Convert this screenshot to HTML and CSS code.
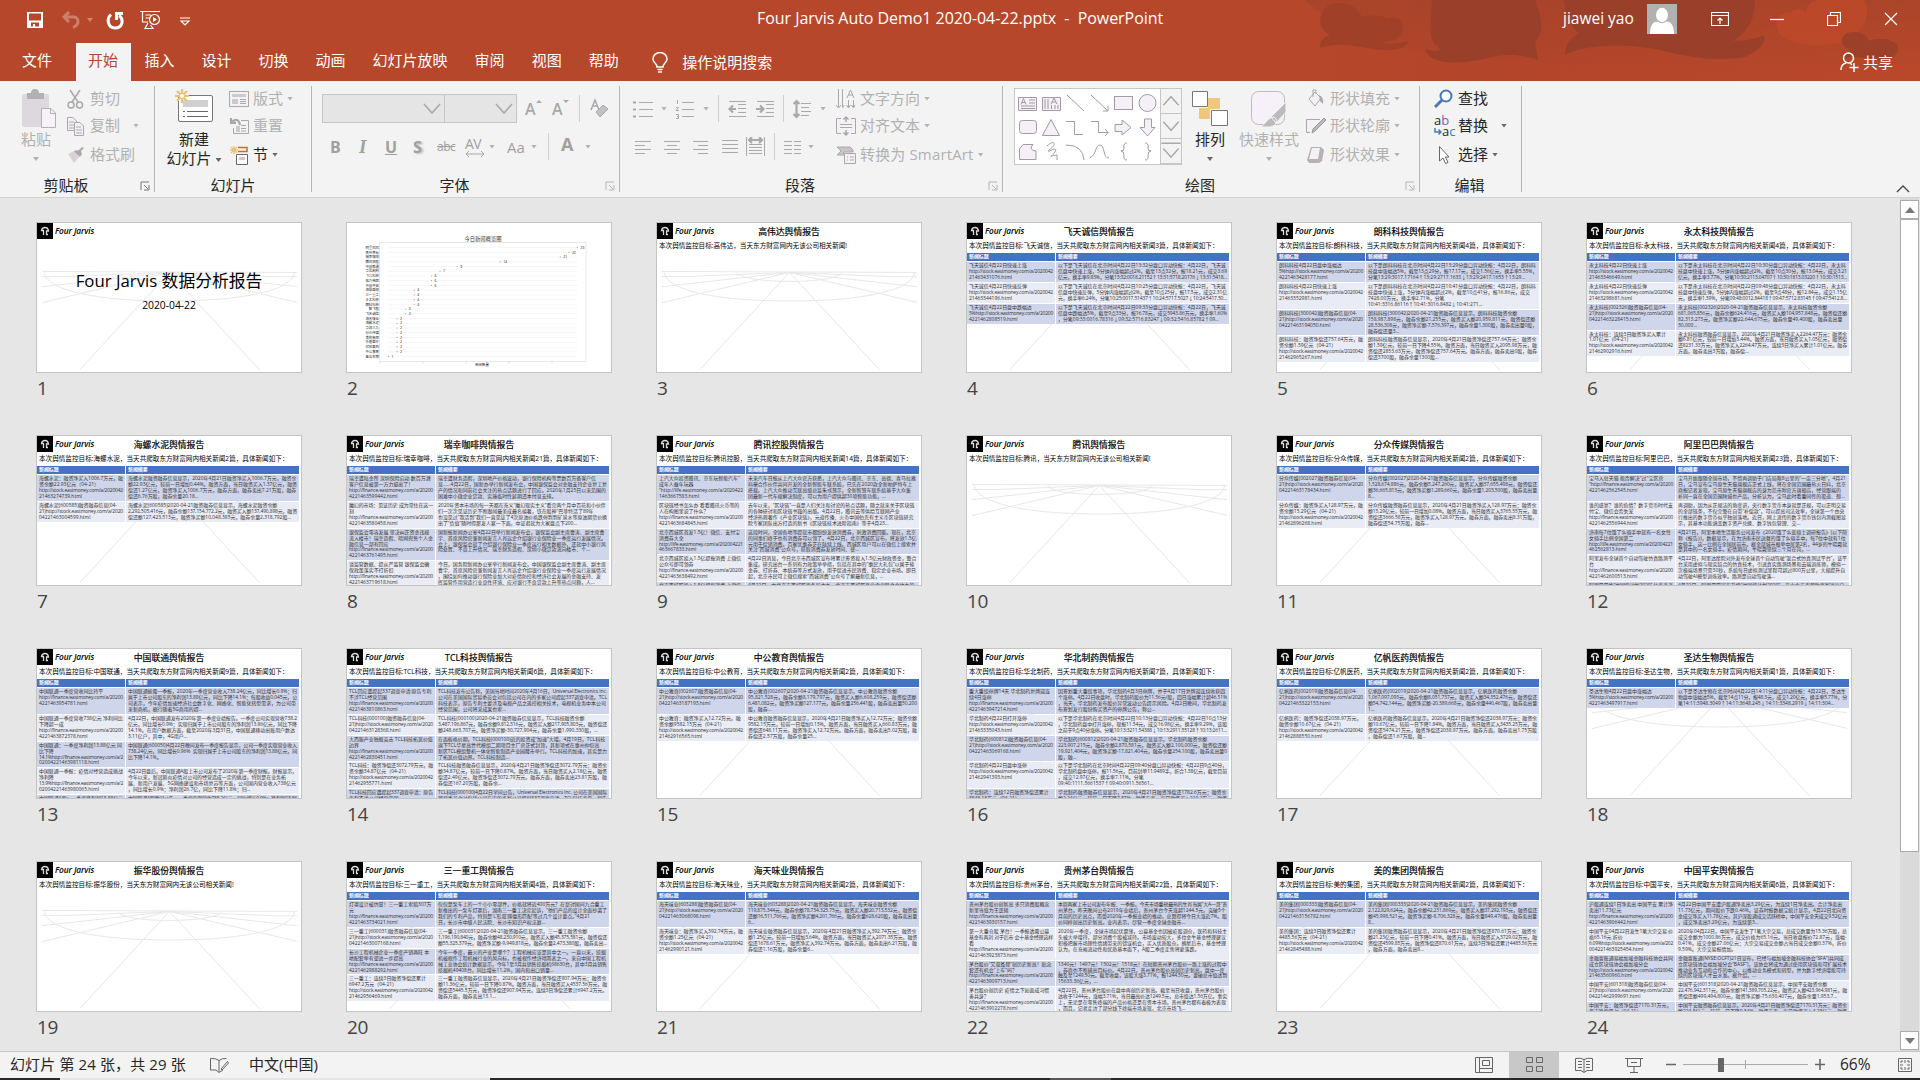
FILE: index.html
```html
<!DOCTYPE html>
<html lang="zh-CN">
<head>
<meta charset="utf-8">
<title>Four Jarvis Auto Demo1 2020-04-22.pptx - PowerPoint</title>
<link rel="stylesheet" href="styles.css">
</head>
<body>
<div class="app">
<header class="top">
  <svg class="decor" viewBox="0 0 1568 243" preserveAspectRatio="none">
    <defs>
      <linearGradient id="warm" x1="0" x2="1"><stop offset="0" stop-color="#b7472a"/><stop offset=".3" stop-color="#b3452a"/><stop offset="1" stop-color="#b9482a"/></linearGradient>
      <linearGradient id="shade" x1="0" x2="0" y1="0" y2="1"><stop offset="0" stop-color="#9d4129" stop-opacity=".5"/><stop offset="1" stop-color="#9d4129" stop-opacity="0"/></linearGradient>
    </defs>
    <rect width="1568" height="243" fill="url(#warm)"/>
    <path fill="url(#shade)" d="M60 0H1568V200C1300 243 900 225 660 190C400 180 200 150 60 0Z"/>
    <path fill="#9d4029" opacity=".85" d="M97 145C99 118 108 112 122 106C90 85 92 40 120 16C150 0 190 15 200 50C235 42 260 50 262 58C290 42 310 70 298 98C290 118 275 125 245 129C275 134 295 130 314 122C312 142 290 152 250 150C200 146 150 120 97 145Z"/>
    <path fill="#9a3f29" d="M372 0H625C640 50 650 95 625 125L632 181C600 165 570 162 530 168C480 184 440 190 405 186C370 180 355 160 357 147C380 158 410 156 378 130C362 100 372 60 372 0Z"/>
    <path fill="#9a3f29" d="M695 0H1163C1165 50 1150 95 1110 122C1140 125 1165 112 1185 107C1195 120 1175 155 1135 172C1060 185 1010 172 930 150C850 128 750 132 697 165C702 130 712 112 733 100C712 80 700 50 695 0Z"/>
    <path fill="#bf492a" opacity=".75" d="M1220 90C1205 50 1235 35 1250 38C1265 20 1285 30 1290 40C1290 15 1300 5 1320 0H1430C1450 30 1435 80 1400 115C1350 150 1230 140 1220 90Z"/>
    <path fill="#9d4029" d="M1382 175C1383 160 1390 155 1400 150C1372 140 1370 112 1390 99C1410 90 1438 100 1442 122C1475 110 1515 120 1514 145C1515 165 1500 178 1470 183C1440 176 1410 165 1382 175Z"/>
  </svg>
  <div class="titlebar">
    <div class="quick">
      <svg width="18" height="18" viewBox="0 0 18 18"><path class="wf" fill-rule="evenodd" d="M1 1H17V17H1ZM3 2.5V9.5H15V2.5ZM5 11.500V15.500H7V13H9V15.500H13V11.500Z"/></svg>
      <svg class="faded" width="20" height="18" viewBox="0 0 20 18"><path class="w3" d="M8 1L3 6L8 11M3.500 6H13C18 6 19 14 12 16.500"/></svg>
      <i class="caret pale"></i>
      <svg width="19" height="19" viewBox="0 0 19 19"><path class="w3" d="M5 3.500C0 8 2 17 9 17C17 17 18 8 13 4.500M10.500 9V2.500H17"/></svg>
      <svg width="22" height="20" viewBox="0 0 22 20"><path class="w1" d="M1 1.500H21M3.500 2V12H9M6.500 5H12M6.500 8H10M9 13L6 18.500H14L11.500 15"/><circle class="w1" cx="15.500" cy="9.500" r="5"/><path class="wf" d="M14 7L18 9.500L14 12Z"/></svg>
      <svg width="12" height="10" viewBox="0 0 12 10"><path class="w1" d="M1 1H11M2 4H10L6 8Z"/></svg>
    </div>
    <div class="doc-title">Four Jarvis Auto Demo1 2020-04-22.pptx&nbsp; -&nbsp; PowerPoint</div>
    <div class="window-tools">
      <span class="user">jiawei yao</span>
      <svg class="avatar" width="30" height="30" viewBox="0 0 30 30"><rect width="30" height="30" fill="#b1b1b1"/><ellipse cx="15" cy="11" rx="6" ry="7.200" fill="#fff"/><path fill="#fff" d="M3 30C3 20 7 17.500 10.500 17.500Q15 21 19.500 17.500C23 17.500 27 20 27 30Z"/></svg>
      <svg width="18" height="14" viewBox="0 0 18 14"><path class="w1" d="M.5.5H17.500V13.500H.5ZM.5 3.500H17.500M9 12V6M6.500 8.500L9 6L11.500 8.500"/></svg>
      <svg width="14" height="14" viewBox="0 0 14 14"><path class="w1" d="M0 7.500H14"/></svg>
      <svg width="14" height="14" viewBox="0 0 14 14"><path class="w1" d="M.5 3.500H10.500V13.500H.5ZM3.500 3V.5H13.500V10.500H11"/></svg>
      <svg width="14" height="14" viewBox="0 0 14 14"><path class="w1" d="M1 1L13 13M13 1L1 13"/></svg>
    </div>
  </div>
  <nav class="tabs">
    <a class="tab file">文件</a><a class="tab active">开始</a><a class="tab">插入</a><a class="tab">设计</a><a class="tab">切换</a><a class="tab">动画</a><a class="tab">幻灯片放映</a><a class="tab">审阅</a><a class="tab">视图</a><a class="tab">帮助</a>
    <svg class="bulb" width="16" height="21" viewBox="0 0 16 21"><path class="w15" d="M5 15C5 11 1 11 1 7A7 6.500 0 0 1 15 7C15 11 11 11 11 15ZM5.500 17.500H10.500M6 20H10"/></svg>
    <span class="tell">操作说明搜索</span>
    <span class="share"><svg width="19" height="20" viewBox="0 0 19 20"><circle class="w15" cx="8.500" cy="6" r="5"/><path class="w15" d="M1 18C1 13 4 11.500 6 11M10 11L12 13M14 11V20M9.500 15.500H18.500"/></svg>共享</span>
  </nav>
</header>

<section class="ribbon">
  <div class="group clipboard">
    <div class="body">
      <div class="big off"><svg width="36" height="40" viewBox="0 0 36 40"><rect x="1" y="5" width="27" height="33" rx="2" fill="#ddd8dd"/><path fill="#b1b1b1" d="M6 4H10Q10 0 14 0Q18 0 18 4H23V10H6Z"/><path fill="#f7f2f8" stroke="#b1b1b1" d="M20.500 19.500H30L34.500 24V38.500H20.500ZM29.500 20V24.500H34"/></svg><span>粘贴</span><i class="caret low"></i></div>
      <div class="list off">
        <div><svg width="20" height="20" viewBox="0 0 20 20"><path class="g15" d="M4 1L12 13M14 1L6 13"/><circle class="g15" cx="5" cy="16" r="3"/><circle class="g15" cx="13.500" cy="16" r="3"/></svg>剪切</div>
        <div><svg width="20" height="20" viewBox="0 0 20 20"><path class="g1 tint" d="M1.500 1.500H7L10.500 5V14.500H1.500ZM3 6H8M3 9H8M3 12H8"/><path class="g1 tint" d="M8.500 6.500H14L17.500 10V19.500H8.500ZM10 11H15M10 14H16M10 17H16"/></svg>复制<i class="caret far"></i></div>
        <div><svg width="20" height="20" viewBox="0 0 20 20"><path fill="#d8d2d8" d="M2 9L10 5L13 12L8 18Z"/><path fill="#aaa" d="M8 6L14 12L16 9L15 6L18 3L16 2L13 5Z"/></svg>格式刷</div>
      </div>
    </div>
    <div class="label">剪贴板</div><svg class="launch" viewBox="0 0 10 10"><path d="M1 9V1H9M4 4L8 8M9 4V9H4"/></svg>
  </div>
  <div class="group slides">
    <div class="body">
      <div class="big"><svg width="40" height="36" viewBox="0 0 40 36"><rect x="4.500" y="7.500" width="34" height="26" rx="1.500" fill="#fff" stroke="#777"/><rect x="9" y="12" width="25" height="7" fill="#d0d0d0"/><path class="d1" d="M9 23.500H11M13 23.500H34M9 28.500H11M13 28.500H34"/><path stroke="#ebc17c" stroke-width="2.200" d="M8 1V15M1 8H15M3 3L13 13M13 3L3 13"/><circle cx="8" cy="8" r="2" fill="#fff"/></svg><span>新建</span><span>幻灯片<i class="caret"></i></span></div>
      <div class="list">
        <div class="off"><svg width="20" height="18" viewBox="0 0 20 18"><rect class="g1" x=".5" y="1.500" width="19" height="15"/><path fill="#cfc9cf" d="M3 4H17V7H3ZM3 9H9V14H3Z"/><path class="g1" d="M11 9.500H17M11 11.500H17M11 13.500H17"/></svg>版式<i class="caret"></i></div>
        <div class="off"><svg width="20" height="18" viewBox="0 0 20 18"><path class="g1" d="M12 3.500H19.500V16.500H4.500V11M12 8.500H17M12 11.500H17M12 14H17"/><path fill="#cfc9cf" d="M7 9H11V15H7Z"/><path class="g2" d="M2 1V6H7M2 6Q9 -1 11 8"/></svg>重置</div>
        <div><svg width="20" height="20" viewBox="0 0 20 20"><path stroke="#ebc17c" stroke-width="1.400" d="M5 1V9M1 5H9M2 2L8 8M8 2L2 8"/><path stroke="#d8661c" stroke-width="1.500" fill="none" d="M9 2.500H18V6.500H9"/><path fill="#fff" stroke="#666" d="M7.500 9.500H18.500V19.500H7.500Z"/><path fill="#ccc" d="M10 12H16V15H10Z"/></svg>节<i class="caret"></i></div>
      </div>
    </div>
    <div class="label">幻灯片</div>
  </div>
  <div class="group font off">
    <div class="body rows">
      <div class="r1">
        <span class="combo"><svg width="18" height="12" viewBox="0 0 18 12"><path class="g15" d="M1 1L9 10L17 1"/></svg></span><span class="combo"><svg width="18" height="12" viewBox="0 0 18 12"><path class="g15" d="M1 1L9 10L17 1"/></svg></span>
        <b class="fa">A<svg width="6" height="4" viewBox="0 0 6 4"><path fill="#a9a9a9" d="M0 3L3 0L6 3Z"/></svg></b><b class="fa">A<svg width="6" height="4" viewBox="0 0 6 4"><path fill="#a9a9a9" d="M0 0H6L3 3Z"/></svg></b><i class="sep"></i>
        <svg width="20" height="22" viewBox="0 0 20 22"><path class="g15" d="M1 12L5 2L9 12M3 8H7"/><path fill="#c6c0c6" stroke="#aaa" d="M6 14L13 7L18 11L10 19Z"/></svg>
      </div>
      <div class="r2">
        <b>B</b><b class="it">I</b><b class="un">U</b><b class="sh">S</b><span class="st">abc</span><span class="av"><span>AV</span><svg width="20" height="6" viewBox="0 0 20 6"><path class="g1" d="M1 3H19M4 0L1 3L4 6M16 0L19 3L16 6"/></svg></span><i class="caret"></i><span class="aa">Aa</span><i class="caret"></i><i class="sep"></i><b class="ca">A</b><i class="caret wide"></i>
      </div>
    </div>
    <div class="label">字体</div><svg class="launch" viewBox="0 0 10 10"><path d="M1 9V1H9M4 4L8 8M9 4V9H4"/></svg>
  </div>
  <div class="group para off">
    <div class="body">
      <div class="rows">
        <div class="r1">
          <svg width="20" height="20" viewBox="0 0 20 20"><path class="g1" d="M6 3.500H20M6 10.500H20M6 17.500H20"/><path class="g2" d="M0 3.500H3M0 10.500H3M0 17.500H3"/></svg><i class="caret"></i>
          <svg width="20" height="20" viewBox="0 0 20 20"><path class="g1" d="M7 3.500H19M7 10.500H19M7 17.500H19M2.500 1V5M1 8.500H3.500L1 11.500H4M1 15.500H3.500V19.500H1M2 17.500H3"/></svg><i class="caret"></i><i class="sep"></i>
          <svg width="19" height="18" viewBox="0 0 19 18"><path class="g1" d="M1 1.500H18M10 4.500H18M10 8.500H18M10 12.500H18M1 16.500H18"/><path class="g2" d="M8 9H2M5 5.500L1.500 9L5 12.500"/></svg>
          <svg width="19" height="18" viewBox="0 0 19 18"><path class="g1" d="M1 1.500H18M10 4.500H18M10 8.500H18M10 12.500H18M1 16.500H18"/><path class="g2" d="M0 9H7M4 5.500L7.500 9L4 12.500"/></svg><i class="sep"></i>
          <svg width="19" height="20" viewBox="0 0 19 20"><path class="g2" d="M3.500 2V18M.5 5L3.500 2L6.500 5M.5 15L3.500 18L6.500 15"/><path class="g1" d="M8 4.500H18M8 8.500H16M8 12.500H18M8 16.500H16"/></svg><i class="caret"></i>
        </div>
        <div class="r2">
          <svg width="17" height="14" viewBox="0 0 17 14"><path class="g1" d="M0 1.500H16M0 5.500H10M0 9.500H16M0 13.500H10"/></svg>
          <svg width="17" height="14" viewBox="0 0 17 14"><path class="g1" d="M0 1.500H16M3 5.500H13M0 9.500H16M3 13.500H13"/></svg>
          <svg width="17" height="14" viewBox="0 0 17 14"><path class="g1" d="M0 1.500H15M5 5.500H15M0 9.500H15M5 13.500H15"/></svg>
          <svg width="17" height="14" viewBox="0 0 17 14"><path class="g1" d="M0 .5H16M0 4.500H16M0 8.500H16M0 12.500H16"/></svg>
          <svg class="dist" width="19" height="19" viewBox="0 0 19 19"><path class="g1" d="M.5 0V19M18.500 0V19M3 7.500H16M3 10.500H16M3 13.500H16M3 16.500H16"/><path class="g2" d="M3 3H16M6 0L3 3L6 6M13 0L16 3L13 6"/></svg><i class="sep"></i>
          <svg width="18" height="14" viewBox="0 0 18 14"><path class="g1" d="M0 1.500H8M0 5.500H8M0 9.500H8M0 13.500H8M10 1.500H17M10 5.500H17M10 9.500H17M10 13.500H17"/></svg><i class="caret"></i>
        </div>
      </div>
      <div class="list">
        <div><svg width="20" height="20" viewBox="0 0 20 20"><path class="g1" d="M2.500 0V18M6.500 0V18M0 16L2.500 19L5 16M6.500 19L8 16M12.500 11V18M17.500 11V18M10.500 16L12.500 19L14.500 16M15.500 16L17.500 19L19 16M11 9L14.500 1L18 9M12 6H17"/></svg>文字方向<i class="caret"></i></div>
        <div><svg width="20" height="20" viewBox="0 0 20 20"><path class="g1 tint" d="M5 2.500H.5V17.500H5M15 2.500H19.500V17.500H15M4 8.500H16M4 11.500H16"/><path class="g15" d="M10 6V1M7.500 3.500L10 1L12.500 3.500M10 14V19M7.500 16.500L10 19L12.500 16.500"/></svg>对齐文本<i class="caret"></i></div>
        <div><svg width="20" height="20" viewBox="0 0 20 20"><path fill="#c9c3c9" stroke="#aaa" d="M1 2H14L17 5V7H8V10H1L5 6Z"/><path class="g1 tint" d="M8.500 8.500H19.500V18.500H8.500ZM11 12H12M14 12H18M11 15H12M14 15H18"/></svg><span class="smart">转换为 SmartArt</span><i class="caret"></i></div>
      </div>
    </div>
    <div class="label">段落</div><svg class="launch" viewBox="0 0 10 10"><path d="M1 9V1H9M4 4L8 8M9 4V9H4"/></svg>
  </div>
  <div class="group draw">
    <div class="body">
      <div class="gallery">
        <svg class="shapes" width="145" height="75" viewBox="0 0 145 75"><g fill="#f5eff7" stroke="#a09ca0">
          <path d="M3.500 8.500H21.500V21.500H3.500ZM14 11H20M14 14H20M6 17H20M6 19.500H20M6 15.500L8.500 9.500L11 15.500M7 13.500H10"/>
          <path d="M27.500 8.500H45.500V21.500H27.500ZM30 10V20M33 10V20M36.500 16V20M40 16V20M43 16V20M36 15L39 9L42 15M37 13H41"/>
          <path fill="none" d="M52 6L69 22M76 6L93 22M93 17V22H88"/>
          <rect x="99.500" y="7.500" width="18" height="13"/><circle cx="132.500" cy="14" r="8.500"/>
          <rect x="4.500" y="31.500" width="17" height="13" rx="3"/><path d="M36 30.500L44.500 46.500H27.500Z"/>
          <path fill="none" d="M51 32.500H59.500V45.500H68M76 32.500H83.500V43.500H93M90 40L93 43.500L90 47"/>
          <path d="M100 35.500H107V31L116 38.500L107 46V42.500H100ZM129.500 30V38.500H125L132.500 47L140 38.500H136.500V30Z"/>
          <path d="M4.500 60L8 55.500H18Q13 61 21 62V70.500H4.500Z"/>
          <path fill="none" d="M32 57C39 50 43 55 34 61C30 66 44 55 40 63C35 70 33 67 42 66V71M51 56Q68 56 69 71M75 69C82 65 80 56 85 56C90 56 88 70 94 69M112 54Q108 54 109 59Q109 62 106 62Q109 62 109 66Q108 71 112 71M130 54Q134 54 133 59Q133 62 136 62Q133 62 133 66Q134 71 130 71"/>
        </g></svg>
        <div class="gscroll"><svg viewBox="0 0 20 25"><path class="g15" d="M2 17L10 8L18 17"/></svg><svg viewBox="0 0 20 25"><path class="g15" d="M2 8L10 17L18 8"/></svg><svg viewBox="0 0 20 25"><path class="g15" d="M0 4.500H20M2 10L10 19L18 10"/></svg></div>
      </div>
      <div class="big arrange"><svg width="38" height="38" viewBox="0 0 38 38"><path fill="#efc77e" d="M17 8H29V19H17ZM8 18H19V29H8Z"/><path fill="#fff" stroke="#777" d="M1.500 1.500H16.500V16.500H1.500ZM20.500 20.500H36.500V35.500H20.500Z"/></svg><span>排列</span><i class="caret low"></i></div>
      <div class="big quickstyle off"><svg width="40" height="38" viewBox="0 0 40 38"><rect x="2.500" y="1.500" width="33" height="33" rx="7" fill="#f6f0f8" stroke="#bbb"/><path fill="#bbb" stroke="#f3f3f3" d="M37 12V22L27 33L22 27ZM25 27C29 29 28 36 21 37H11C16 36 17 28 25 27Z"/></svg><span>快速样式</span><i class="caret low"></i></div>
      <div class="list off">
        <div><svg width="20" height="20" viewBox="0 0 20 20"><path class="g1 tint" d="M3 10L9 3L15 9L9 17ZM7 8V1H10V5"/><path fill="#aaa" d="M13 6Q18 8 17 15L14 12Z"/></svg>形状填充<i class="caret"></i></div>
        <div><svg width="20" height="20" viewBox="0 0 20 20"><path class="g1 tint" d="M14 3.500H.5V16.500H4"/><path fill="#bbb" stroke="#999" d="M18 2L20 4L9 15L6 17L7 13Z"/></svg>形状轮廓<i class="caret"></i></div>
        <div><svg width="20" height="20" viewBox="0 0 20 20"><path fill="#b5b1b5" d="M5 2H15L18 5L16 16L13 18H3L1 15Z"/><path fill="#f5f0f5" d="M6 3H14L12 14H3Z"/></svg>形状效果<i class="caret"></i></div>
      </div>
    </div>
    <div class="label">绘图</div><svg class="launch pale-launch" viewBox="0 0 10 10"><path d="M1 9V1H9M4 4L8 8M9 4V9H4"/></svg>
  </div>
  <div class="group edit">
    <div class="body"><div class="list">
      <div><svg width="20" height="20" viewBox="0 0 20 20"><circle cx="12" cy="7" r="5.500" fill="#fff" stroke="#477ab5" stroke-width="2"/><path stroke="#477ab5" stroke-width="3" d="M8 11L1 18"/></svg>查找</div>
      <div><span class="abac"><span>a<em>b</em></span><span><svg width="8" height="8" viewBox="0 0 8 8"><path fill="none" stroke="#477ab5" stroke-width="1.500" d="M1 0V4H7M4.500 1.500L7 4L4.500 6.500"/></svg>a<u>c</u></span></span>替换<i class="caret far2"></i></div>
      <div><svg width="20" height="20" viewBox="0 0 20 20"><path fill="#fff" stroke="#666" d="M5.500 1.500V16L9 13L11.500 18.500L14 17.500L11.500 12H15Z"/></svg>选择<i class="caret"></i></div>
    </div></div>
    <div class="label">编辑</div>
  </div>
  <svg class="collapse" width="14" height="8" viewBox="0 0 14 8"><path fill="none" stroke="#444" stroke-width="1.300" d="M1 7L7 1L13 7"/></svg>
</section>

<main class="sorter">
  <div class="deck" id="deck"></div>
  <div class="scrollbar"><div class="sbtn"><svg width="10" height="6" viewBox="0 0 10 6"><path d="M0 6L5 0L10 6Z"/></svg></div><div class="thumb"></div><div class="track"></div><div class="sbtn"><svg width="10" height="6" viewBox="0 0 10 6"><path d="M0 0H10L5 6Z"/></svg></div></div>
</main>

<footer class="status">
  <span class="count">幻灯片 第 24 张，共 29 张</span>
  <svg class="book" width="19" height="16" viewBox="0 0 19 16"><path class="d1" d="M9 3.500Q6 1 .5 1.500V13H6L9 15.500M9 15V3.500Q12 1 16.500 1.500M11 12L17.500 4.500L18.500 6L12 13ZM9 15.500L13 13"/></svg>
  <span class="lang">中文(中国)</span>
  <div class="views">
    <span class="view"><svg width="18" height="16" viewBox="0 0 18 16"><path class="d1" d="M.5.5H17.500V15.500H.5ZM4.500.5V15.500M7.500 3.500H14.500V8.500H7.500ZM5 11.500H17"/></svg></span>
    <span class="view on"><svg width="17" height="16" viewBox="0 0 17 16"><path class="d1" d="M.5.5H6.500V5.500H.5ZM10.500.5H16.500V5.500H10.500ZM.5 9.500H6.500V14.500H.5ZM10.500 9.500H16.500V14.500H10.500Z"/></svg></span>
    <span class="view"><svg width="18" height="16" viewBox="0 0 18 16"><path class="d1" d="M9 2.500Q6 .5.5 1.500V13.500H6L9 15.500L12 13.500H17.500V1.500Q12 .5 9 2.500V15M3 4.500H7M3 7.500H7M3 10.500H7M11 4.500H15M11 7.500H15M11 10.500H15"/></svg></span>
    <span class="view"><svg width="18" height="16" viewBox="0 0 18 16"><path class="d1" d="M0 1.500H18M2.500 2V9.500H15.500V2M9 10V15M5 15.500H13M6 5.500H12"/></svg></span>
  </div>
  <svg class="zoomer" width="160" height="16" viewBox="0 0 160 16"><path class="d15" d="M0 7.500H10M149 7.500H159M154 2V13"/><path stroke="#aaa" d="M17 7.500H142M79.500 3V12"/><rect x="52" y="1" width="6" height="14" fill="#666"/></svg>
  <span class="pct">66%</span>
  <svg class="fit" width="14" height="14" viewBox="0 0 14 14"><path class="d1" d="M.5.5H13.500V13.500H.5ZM7 2V5M7 9V12M2 7H5M9 7H12M3 5V3H5M9 3H11V5M11 9V11H9M5 11H3V9"/></svg>
</footer>
<div class="below"><i></i><i></i></div>
</div>
<script src="slides.js"></script>
</body>
</html>
```
FILE: styles.css
```css
* { box-sizing: border-box; }
body { margin: 0; font-family: "Open Sans", "Noto Sans CJK SC", sans-serif; font-size: 15px; color: #262626; overflow: hidden; }
svg { display: block; flex: none; }
i { font-style: normal; }
.app { width: 1920px; height: 1080px; display: flex; flex-direction: column; background: #e6e6e6; }
.wf { fill: #fff; }
.w1, .w15, .w3 { fill: none; stroke: #fff; stroke-width: 1.2; }
.w15 { stroke-width: 1.5; }
.w3 { stroke-width: 3; }
.g1, .g15, .g2 { fill: none; stroke: #a9a9a9; stroke-width: 1; }
.tint { fill: #f5f0f5; }
.g15 { stroke-width: 1.5; }
.g2 { stroke-width: 2.2; }
.d1, .d15 { fill: none; stroke: #666; }
.d15 { stroke-width: 1.6; }
.caret { display: inline-block; flex: none; width: 6px; height: 4px; background: #666; clip-path: polygon(0 0, 100% 0, 50% 100%); margin-left: 4px; vertical-align: middle; }
.off { color: #b1b1b1; }
.off .caret { background: #b1b1b1; }

.top { position: relative; height: 81px; background: #b7472a; color: #fff; flex: none; }
.decor { position: absolute; right: 0; top: 0; width: 640px; height: 81px; }
.titlebar { position: relative; height: 43px; display: flex; }
.quick { display: flex; align-items: center; width: 757px; height: 40px; padding-left: 26px; }
.quick svg:nth-of-type(2) { margin-left: 17px; }
.quick svg:nth-of-type(3) { margin-left: 13px; }
.quick svg:nth-of-type(4) { margin-left: 14px; }
.quick svg:nth-of-type(5) { margin: 3px 0 0 18px; }
.quick .caret { background: #cf8570; margin-left: 6px; }
.faded { opacity: .3; }
.doc-title { font-size: 16px; line-height: 37px; width: 806px; white-space: nowrap; letter-spacing: -.05px; }
.window-tools { display: flex; align-items: center; height: 38px; }
.user { width: 84px; font-size: 15.5px; line-height: 37px; height: 38px; }
.avatar { margin-right: 34px; }
.window-tools svg:nth-of-type(3) { margin: 0 43px 0 41px; }
.window-tools svg:nth-of-type(4) { margin-right: 43px; }
.tabs { position: relative; height: 38px; display: flex; align-items: center; }
.tab { height: 38px; line-height: 35px; padding: 0 13.5px; }
.tab.file { padding: 0 24px 0 22px; }
.tab.active { background: #f3f3f3; color: #b7472a; padding: 0 13px 0 12px; }
.bulb { margin: 0 14px 0 20px; }
.tell { line-height: 36px; }
.share { margin: 0 27px 0 auto; display: flex; align-items: center; gap: 4px; line-height: 38px; }

.ribbon { height: 117px; padding-top: 5px; background: #f3f3f3; border-bottom: 1px solid #d2d2d2; display: flex; flex: none; position: relative; white-space: nowrap; }
.group { height: 106px; border-right: 1px solid #b5b5b5; position: relative; }
.body { height: 92px; display: flex; }
.label { line-height: 15px; text-align: center; color: #262626; }
.launch { position: absolute; right: 4px; bottom: 1px; width: 10px; height: 10px; fill: none; stroke: #777; }
.off .launch, .pale-launch { stroke: #b5b5b5; }
.clipboard { width: 155px; } .clipboard .label { padding-right: 22px; }
.slides { width: 157px; }
.font { width: 308px; } .font .label { padding-right: 22px; }
.para { width: 383px; } .para .label { padding-right: 22px; }
.draw { width: 417px; } .draw .label { padding-right: 22px; }
.edit { width: 102px; } .edit .label { padding: 0 2px 0 0; }
.list { display: grid; grid-template-rows: 25px 29px 29px; align-content: start; }
.list > div { display: flex; align-items: center; line-height: 25px; }
.list svg { margin-right: 4px; }
.big { display: flex; flex-direction: column; align-items: center; line-height: 19px; }
.big svg { height: 40px; margin: 3px 0 1px; }
.big .low { margin: 8px 0 0; }
.clipboard .big { width: 52px; margin: 0 4px 0 10px; }
.clipboard .big svg { margin-left: 6px; }
.clipboard .far { margin-left: 13px; }
.slides .big { margin: 0 7px 0 11px; width: 56px; }
.slides .big svg { height: 36px; margin: 2px 0 6px; }
.rows { flex-direction: column; }
.r1, .r2 { display: flex; align-items: center; }
.r1 { height: 45px; } .r2 { height: 31px; }
.sep { width: 1px; height: 27px; background: #d0d0d0; flex: none; }
.font .body { padding-left: 10px; }
.combo { width: 123px; height: 29px; background: #e5e5e5; border: 1px solid #c6c6c6; display: flex; align-items: center; justify-content: flex-end; padding-right: 3px; }
.combo + .combo { width: 73px; margin: 0 8px 0 -1px; }
.fa { font-weight: 600; font-size: 16px; width: 27px; color: #a9a9a9; line-height: 30px; display: flex; }
.fa svg { margin-top: 6px; }
.font .r1 .sep { margin: 0 10px 0 0; }
.r2 { color: #a0a0a0; font-size: 16px; }
.font .r2 { padding-left: 8px; }
.r2 b { width: 28px; flex: none; }
.r2 b.it { font-family: "Liberation Serif", serif; font-style: italic; font-size: 19px; width: 27px; padding-left: 1px; }
.un { text-decoration: underline; }
.sh { text-shadow: 2px 1px 2px #bbb; }
.st { font-size: 12px; text-decoration: line-through; width: 28px; letter-spacing: -.5px; margin-left: -4px; }
.av { width: 20px; font-size: 14px; line-height: 15px; letter-spacing: -.5px; }
.aa { font-size: 15px; margin-left: 12px; width: 20px; }
.font .r2 .sep { margin: 0 12px 0 11px; }
.r2 b.ca { width: 16px; font-size: 18px; line-height: 24px; margin-top: -6px; }
.caret.wide { margin-left: 8px; }
.para .rows { width: 202px; padding-left: 13px; margin-right: 14px; }
.para .r1 .caret { margin: 0 8px; }
.para .r1 .sep { margin: 0 9px 0 1px; }
.para .r1 svg + svg { margin-left: 9px; }
.para .r1 svg + .sep { margin-left: 8px; }
.para .r2 { padding-left: 2px; gap: 12px; }
.para .r2 .dist { margin-left: -5px; }
.para .r2 svg + .sep { margin-left: -3px; }
.para .r2 .sep + svg { margin-left: -3px; }
.para .r2 .caret { margin-left: -6px; }
.smart { letter-spacing: .15px; }
.gallery { margin: 2px 0 0 11px; width: 168px; height: 77px; border: 1px solid #c6c6c6; background: #fff; display: flex; }
.gscroll { width: 21px; border-left: 1px solid #c6c6c6; background: #f3f3f3; }
.gscroll svg { width: 20px; height: 25px; border-bottom: 1px solid #c6c6c6; }
.arrange { width: 56px; }
.quickstyle { width: 72px; margin-left: -5px; }
.draw .list { margin-left: 1px; }
.edit .list { margin-left: 14px; }
.abac { width: 20px; margin-right: 4px; font-size: 13px; line-height: 11px; }
.abac > span { display: flex; }
.abac em { font-style: normal; color: #8a5aa8; }
.abac u { text-decoration: none; color: #477ab5; }
.abac svg { margin: 2px 0 0; }
.far2 { margin-left: 13px; }
.collapse { margin: 99px 10px 0 auto; }

.sorter { height: 853px; display: flex; flex: none; overflow: hidden; }
.deck { width: 1900px; padding: 24px 0 0 36px; display: grid; grid-template-columns: repeat(6, 266px); grid-auto-rows: 213px; column-gap: 44px; align-content: start; }
.scrollbar { width: 19px; display: flex; flex-direction: column; padding: 2px 0 1px; background: #dadada; }
.sbtn { height: 19px; flex: none; background: #fff; border: 1px solid #ababab; display: flex; align-items: center; justify-content: center; fill: #777; }
.thumb { height: 633px; background: #fff; border: 1px solid #ababab; flex: none; }
.track { flex: 1; }

.slide { position: relative; width: 266px; height: 151px; background: #fff; border: 1px solid #c4c4c4; overflow: hidden; color: #000; white-space: pre; }
.num { font-size: 19px; line-height: 30px; color: #444; padding-left: 1px; letter-spacing: -.3px; }
.court { position: absolute; left: 0; top: 0; width: 264px; height: 149px; fill: none; stroke: #e8e8e8; }
.court path { vector-effect: non-scaling-stroke; }
.head { position: relative; display: grid; height: 16px; align-items: center; }
.head > * { grid-area: 1 / 1; }
.brand { display: flex; align-items: center; font: italic 600 8.3px/16px "Open Sans", sans-serif; letter-spacing: -.1px; }
.brand svg { background: #000; margin-right: 2px; }
.name { justify-self: center; font-size: 8.8px; line-height: 14px; padding-top: 2px; -webkit-text-stroke: .2px #000; }
.sub { position: relative; height: 14px; padding-left: 2px; font-size: 6.6px; line-height: 14px; }
.table { position: relative; display: grid; grid-template-columns: 88px 173px; gap: 1px; font-size: 4.95px; line-height: 5.95px; color: #333; }
.table > div { padding: 1px 2px; background: #e9ebf5; overflow: hidden; }
.table > .odd { background: #cfd5ea; }
.table > .th { background: #4472c4; color: #fff; font-weight: 700; height: 8px; }
.line { display: block; width: max-content; }
.cover { position: relative; text-align: center; font-size: 16.8px; line-height: 26px; padding-top: 29px; }
.cover small { display: block; font-size: 10.3px; line-height: 23px; }
.chart { display: block; font-size: 3.4px; fill: #222; }

.status { height: 27px; background: #f3f3f3; border-top: 1px solid #c6c6c6; display: flex; align-items: center; padding-left: 10px; flex: none; white-space: nowrap; line-height: 24px; }
.status span { height: 26px; }
.count { width: 200px; letter-spacing: .12px; }
.book { margin-right: 20px; }
.views { display: flex; margin-left: auto; }
.view { width: 50px; display: flex; align-items: center; justify-content: center; }
.view.on { background: #c8c8c8; }
.zoomer { margin: 0 14px 0 7px; }
.pct { width: 58px; font-size: 15.5px; }
.fit { margin-right: 8px; }
.below { height: 2px; background: #2b282a; display: flex; }
.below i { width: 430px; margin-left: 60px; background: #e5e5e5; }
.below i + i { width: 61px; margin-left: 560px; background: #5a5658; }
```
FILE: slides.js
```js
// Each slide: [company, article count, rows]; a row holds the title cell and the summary cell.
const S = 'http://stock.eastmoney.com/a/2020042\n';
const F = 'http://finance.eastmoney.com/a/20200\n';
const L = '21)http://stock.eastmoney.com/a/2020\n';
const decks = {
3: ['高伟达', 0],
4: ['飞天诚信', 3, [
 ['飞天诚信4月22日快速上涨\n' + S + '21463431076.html', '以下是飞天诚信在北京时间4月22日13:32分盘口异动快报：4月22日，飞天诚\n信盘中快速上涨，5分钟内涨幅超过2%，截至13点32分，报18.21元，成交3.69\n亿元，换手率9.83%，分笔13:32:0018.21152↑13:31:5718.20176↓13:31:5418…'],
 ['飞天诚信4月22日快速反弹\n' + S + '21463344196.html', '以下是飞天诚信在北京时间4月22日10:25分盘口异动快报：4月22日，飞天诚\n信盘中快速反弹，5分钟内涨幅超过2%，截至10点25分，报17.5元，成交2.31亿\n元，换手率6.24%，分笔10:25:0017.51437↑10:24:5717.5027↓10:24:5417.50…'],
 ['飞天诚信4月22日盘中跌幅达\n5%http://stock.eastmoney.com/a/20200\n4221462808519.html', '以下是飞天诚信在北京时间4月22日09:33分盘口异动快报：4月22日，飞天诚\n信盘中跌幅达5%，截至9点33分，报16.78元，成交5943.86万元，换手率1.60%\n，分笔09:33:0016.78316↓09:32:5716.83247↓09:32:5416.85782↑09…']]],
5: ['朗科科技', 4, [
 ['朗科科技4月22日盘中涨幅达\n5%http://stock.eastmoney.com/a/20200\n4221463428177.html', '以下是朗科科技在北京时间4月22日13:29分盘口异动快报：4月22日，朗科科\n技盘中涨幅达5%，截至13点29分，报17.17元，成交1.56亿元，换手率5.55%，\n分笔13:29:3017.17164↑13:29:2717.1633↓13:29:2417.1653↑13:29…'],
 ['朗科科技4月22日快速上涨\n' + S + '21463352981.html', '以下是朗科科技在北京时间4月22日10:41分盘口异动快报：4月22日，朗科科\n技盘中快速上涨，5分钟内涨幅超过2%，截至10点41分，报16.86元，成交\n7428.00万元，换手率2.71%，分笔\n10:41:3316.86116↑10:41:3016.8482↓10:41:271…'],
 ['朗科科技(300042)融资融券信息(04-\n' + L + '04221463194050.html', '朗科科技(300042)2020-04-21融资融券信息显示，朗科科技融资余额\n158,987,898元，融券余额21,255元，融资买入额20,959,811元，融资偿还额\n28,536,308元，融资净买额-7,576,397元，融券余量1,300股，融券卖出量0股，\n融券偿还量3…'],
 ['朗科科技：融资净偿还757.64万元，融\n资余额1.59亿元（04-21）\n' + S + '21462965267.html', '朗科科技融资融券信息显示，2020年4月21日融资净偿还757.64万元；融资余\n额1.59亿元，较前一日下降4.55%。融资方面，当日融资买入2095.98万元，融\n资偿还2853.63万元，融资净偿还757.64万元。融券方面，融券卖出0股，融券\n偿还3700股，融券余量1300股…']]],
6: ['永太科技', 4, [
 ['永太科技4月22日快速上涨\n' + S + '21463346649.html', '以下是永太科技在北京时间4月22日10:30分盘口异动快报：4月22日，永太科\n技盘中快速上涨，5分钟内涨幅超过2%，截至10点30分，报13.04元，成交3.21\n亿元，换手率3.77%，分笔10:30:2113.04707↑10:30:1813.03220↑10:30:1513…'],
 ['永太科技4月22日快速反弹\n' + S + '21463298681.html', '以下是永太科技在北京时间4月22日09:48分盘口异动快报：4月22日，永太科\n技盘中快速反弹，5分钟内涨幅超过2%，截至9点48分，报12.84元，成交1.15亿\n元，换手率1.39%，分笔09:48:0012.84418↑09:47:5712.83145↑09:47:5412.8…'],
 ['永太科技(002326)融资融券信息(04-\n' + L + '04221463228415.html', '永太科技(002326)2020-04-21融资融券信息显示，永太科技融资余额\n681,065,856元，融券余额624,416元，融资买入额104,957,848元，融资偿还额\n82,313,273元，融资净买额22,644,675元，融券余量49,400股，融券卖出量\n30,000…'],
 ['永太科技：连续3日融资净买入累计\n1.01亿元（04-21）\n' + S + '21462902916.html', '永太科技融资融券信息显示，2020年4月21日融资净买入2264.47万元；融资余\n额6.81亿元，较前一日增加3.44%。融资方面，当日融资买入1.05亿元，融资偿\n还8231.33万元，融资净买入2264.47万元，连续3日净买入累计1.01亿元。融券\n方面，融券卖出3万股，融券偿…']]],
7: ['海螺水泥', 2, [
 ['海螺水泥：融资净买入1006.7万元，融\n资余额22.93亿元（04-21）\n' + S + '21463274739.html', '海螺水泥融资融券信息显示，2020年4月21日融资净买入1006.7万元，融资余\n额22.93亿元，较前一日增加0.44%。融资方面，当日融资买入1.37亿元，融资\n偿还1.27亿元，融资净买入1006.7万元，融券方面，融券卖出7.21万股，融券\n偿还6.76万股，融券余量20.18…'],
 ['海螺水泥(600585)融资融券信息(04-\n' + L + '04221463004599.html', '海螺水泥(600585)2020-04-21融资融券信息显示，海螺水泥融资余额\n2,292,505,416元，融券余额137,154,772.2元，融资买入额137,490,898元，融资\n偿还额127,423,513元，融资净买额10,048,385元，融券余量2,318,792股…']]],
8: ['瑞幸咖啡', 21, [
 ['瑞幸遭陆金所 深圳保险启动 数百万潜\n客户信息被第一方力挺出了！\n' + F + '4221463599442.html', '瑞幸遭财务造假，深圳地产价格波动，银行保险机构等票数百万备客户信\n息……4月22日，国新办举行新闻发布会，中国银保监会对金融支持企业复工复\n产的情况和同前社会关注的热点话题进行了回应。2020年1月25日以来范围的\n困难中小微企业贷款、实施临时性延期还本付息安排。'],
 ['魔幻的市场：见证历史 成为常住在这一\n刻\n' + F + '4221463580458.html', '2020年资本市场的每一天都在充义“魔幻现实主义”看完两个月中百花和小伙伴\n们一次次见证历史不断跟闻最美成最名编著，铁在股神“巴菲特活了89年\n也没见过“我活到”我们一直见证了4次原油价格跌停到到矿泉水等原油期货价换\n出了“负值”随时得那发人寒一下面，中证君就为大家盘点下200…'],
 ['银保监会零容发展 坚决纠正资金违规\n流入楼市！瑞幸造假、暗网兜售个人金\n融信息一部有回应\n' + F + '4221463761495.html', '国新报新闻办公室4月22日举行新闻发布会，银保监会副主席曹涛、副主席曹\n宇、首席风险官兼新闻发言人肖远企介绍银行业保险业一季度运行发展情况。\n会上，银保监会就了介绍银行保险业一季度运行相关数据外，还就中小银行风\n险处置、不良上升情况、瑞幸财务造假、深圳小微贷款流向楼市、个…'],
 ['谈监管数据、提从严监管 银保监会确\n保政策落实不打折扣\n' + F + '4221463719618.html', '今日，国务院新闻办公室举行新闻发布会，中国银保监会副主席曹涛、副主席\n曹宇、首席风险官兼新闻发言人肖远企介绍银行业保险业一季度运行发展情况\n，围绕如何推动银行保险业加大对疫情防控和经济社会发展的金融支持、发\n挥监管作用营造行业良性环境、应对银行不良贷款上升等热点问题，人…'],
 ['', '']]],
9: ['腾讯控股', 14, [
 ['上汽大众投资腾讯、京东玩智能汽车“\n成年人蚕年玩器\n"http://life.eastmoney.com/a/2020422\n1463667583.html', '未来汽车日报从上汽大众官方获悉，上汽大众与腾讯、京东、高德、喜马拉雅\n科豪合作伙伴共同开发的全新智能车联系统，已先在2020款全新帕萨特车上\n搭载。上汽大众推动互联高级总监朱戎慧示，全新智慧车联系统基于大众集\n团最新一代车规解决制度，可以为用户提供超30项智能功能，…'],
 ['区块链经书怎么办 看看腾讯火币等的\n人在构图里说了什么？\n' + F + '4221463684845.html', '去年以来，“区块链”一直是人们关注和讨论的热点话题，随之就来关于区块链\n的各种研讨和区块链书籍的出版。4月22日，腾讯云等供给互联网产业\n经济热观著作《产业区块链》，元道传播、火币中国伯克有主义币区块链研究\n院专家团队出方打造的新书《区块链技术进阶指南》等于4月23…'],
 ['北京西城区首发1.5亿！微信、支付宝\n消费券大全\nhttp://life.eastmoney.com/a/202004221\n463667833.html', '这段时间，全国各地等提就市都纷纷发放消费券，刺激消费回暖。现在，北京\n的同事们终于也有消费券可以领了。4月22日，北京西城区宣布，将发放1.5亿\n元用于促销消费。百家优惠券正在陆续上线。西城区用户可以在微信上搜索并\n关注“西城消费”公众号，获取消费券发放时间、使…'],
 ['北京西城区投入1.5亿提振消费 上微信\n公众号即可领券\n' + F + '4221463638492.html', '4月22日消息，今日北京市西城区宣布将累计筹资投入1.5亿元财政资金，整合\n集成，研究出台一系列有力政策举举措，包括在其中的“惠民大礼包”以属于轮\n金券、打折券、本统券等方式发放，用于促进市民消费、稳定企业市场。即日\n起，北京市民可上微信搜索“西城消费”公众号了解最新信息，…'],
 ['北京西城区投入1.5亿提振消费 上微信', '4月22日，由北京市西城区商务局主办、北京市西城区商业企业联合会协办的']]],
10: ['腾讯', 0],
11: ['分众传媒', 2, [
 ['分众传媒(002027)融资融券信息(04-\n' + L + '04221463178434.html', '分众传媒(002027)2020-04-21融资融券信息显示，分众传媒融资余额\n1,528,674,886元，融券余额5,247,260元，融资买入额37,655,498元，融资偿还\n额36,665,813元，融资净买额1,289,660元，融券余量1,203,500股，融券卖出量\n8…'],
 ['分众传媒：融资净买入128.97万元，融\n资余额15.29亿元（04-21）\n' + S + '21462896268.html', '分众传媒融资融券信息显示，2020年4月21日融资净买入128.97万元；融资余\n额15.29亿元，较前一日增加0.08%。融资方面，当日融资买入3765.55万元，融\n资偿还3666.58万元，融资净买入128.97万元。融券方面，融券卖出8.31万股，\n融券偿还54.75万股，融券…']]],
12: ['阿里巴巴', 23, [
 ['宝马入驻天猫 能否解决"过"宝区房\n"http://finance.eastmoney.com/a/20200\n4221462562545.html', '宝马开始跟随全国市场，不惜再调助于门店局限8公里的“一亩三分地”，4月21\n日，宝马宣布宝马原生天猫旗舰店正式上线，将在全国范围最热火日抖，北京\n商报记者发现，宝马原生天猫旗舰店的身为范市附官方旗舰店，经营跟端的\n补同一直在全国范围陕城也产品，分析认为，宝马此时看重同传的渠道、想…'],
 ['谁的盛宴？谁的危情？数字货币时代支\n付宝、微信会否失宠\n' + F + '4221462556944.html', '再调助，因为从正规法的角度讲，央行数字货币本身就是正规，可以正明交易\n的全部链条，不仅完整在自带“补偿款”，可以提高司法效率，全球第一个由央\n行推出的数字货币似乎独创落地。近日，网上流传的数字货币钱包内测截图显\n示，其基本功能涵盖数字资产兑换、数字钱包管理、交…'],
 ['济南每7位饿了么骑手中就有一名女性\n女骑手比例全国第二\nhttp://life.eastmoney.com/a/202004221\n462562813.html', '4月21日，阿里本地生活服务公司发布《2020饿了么蓝骑士调研报告》(以下简\n称《报告》)，数据显示，在为济南市民送餐的饿了么骑手中，每7位中就有1位\n女骑手，这一比例在全国居前市。据全部城市根单中居第2名，44岁的牛晓霞就\n是其中的一名女骑手。疫情期间，牛晓霞坚续三个月在岗，…'],
 ['阿里发布全球首个自动驾驶仿真路测平\n台\n' + F + '4221462600513.html', '4月22日，阿里达摩院对外发布全球首个自动驾驶“混合式仿真测试平台”，该平\n台采用虚拟与现实结合的仿真技术，引进真实路测场景和云端训练师，模拟一\n次极端场景只需30秒，系统每日虚拟测试里程可超过800万公里，大规提升自\n动驾驶AI模型训练效率。路测是自动驾驶落…'],
 ['阿里巴巴推“福国侠计划2020” 扶养手老', '4月22日，阿里巴巴宣布升级“福国侠计划2020”，在六个方面帮助商家进行自']]],
13: ['中国联通', 9, [
 ['中国联通一季度营收同比持平\n' + F + '4221463954781.html', '中国联通披露一季报，2020年一季度营业收入738.24亿元，同比增长0.9%；归\n属于上市公司股东的净利润13.88亿元，同比下降14.1%；每股收益0.045元，公\n司表示，今年疫情加速经济社会数字化、网络化、智能化转型需求，为公司带\n来新商机，据行随着5G商用的提…'],
 ['中国联通一季度营收738亿元 净利同比\n下降超一成\n' + F + '4221463872378.html', '4月22日，中国联通发布2020年第一季度业绩报告。一季度公司实现营收738.2\n亿元，同比增长0.9%；实现归属于上市公司股东的净利润13.86亿元，同比下降\n14.1%。在用户数据方面，截至2020年3月31日，中国联通移动出账用户数达\n3.11亿户，其中，4G用户…'],
 ['中国联通：一季度净利润13.88亿元 同\n比下降\n14.1%http://finance.eastmoney.com/a/2\n02004221463981118.html', '中国联通(600050)4月22日晚间发布一季度报告显示，公司一季度实现营业收入\n738.24亿元，同比增长0.96%  实现归属于上市公司股东的净利润13.88亿元，同\n比下降14.1%。'],
 ['中国联通一季报：疫情对经营造成挑战\n净利降\n13.9%http://finance.eastmoney.com/a/2\n02004221463980065.html', '4月22日盘后，中国联通A股上市公司发布了2020年第一季度财报。财报显示，\n今年以来，新冠肺炎疫情对公司的经营造成一定的挑战，特别是在业务拓\n展、新用户发展、5G网络建设和市场复苏等方面，公司国内营业收入738亿元\n，同比增长0.9%；净利润26.7亿，同比下降11.8%；归…'],
 ['中国联通A股：一季度净利润13.88亿元', '中国联通A股晚间公告，一季度实现营收738.2亿元，同比增长0.9%；净利润13.86']]],
14: ['TCL科技', 6, [
 ['TCL回应遭提起337调查申请:原告专利\n不涉TCL经营范围\n' + F + '4221463810863.html', 'TCL科技发布公告称，美国当地时间2020年4月16日，Universal Electronics Inc.\n公司在美国国际贸易委员会对包括公司在内的多家公司提起337调查申请。TCL\n科技表示，原告专利主要涉及电视产品之遥控相关技术，电视机业务中本公司\n经营范围，公司将采成果也索…'],
 ['TCL科技(000100)融资融券信息(04-\n' + L + '04221463128368.html', 'TCL科技(000100)2020-04-21融资融券信息显示，TCL科技融资余额\n3,487,196,867元，融券余额9,812,316元，融资买入额217,905,803元，融资偿还\n额248,663,707元，融资净买额-30,727,904元，融券余量1,990,330股，…'],
 ['大西服产业独舰突击 TCL科技拓宽价值\n边界\n' + F + '4221462830451.html', '在面板格价期，TCL科技(000100)近的投资成“加速”大增。4月19日，TCL科技\n旗下TCL华星高世代模组二期项目主厂房正式封顶，其新项式在惠州仲恺高\n新区TCL模组整机一体化智能制造产业园隆市举行。TCL科技的加速，其实是力\n了拓宽价值边界。TCL科技制造…'],
 ['TCL科技：融资净偿还3072.79万元，融\n资余额34.87亿元（04-21）\n' + S + '21462955771.html', 'TCL科技融资融券信息显示，2020年4月21日融资净偿还3072.79万元；融资余\n额34.87亿元，较前一日下降0.87%。融资方面，当日融资买入2.18亿元，融资\n偿还2.49亿元，融资净偿还3072.79万元。融券方面，融券卖出23.81万股，融\n券偿还167.20万股，融券余…'],
 ['TCL科技回应遭提起337调查申请：原告\n专利不涉公司经营范围', 'TCL科技(000100)4月22日早间公告，Universal Electronics Inc. 公司在美国国际\n贸易委员会对包括公司在内的多家公司提起337调查申请。TCL科技表示，原告']]],
15: ['中公教育', 2, [
 ['中公教育(002607)融资融券信息(04-\n' + L + '04221463187193.html', '中公教育(002607)2020-04-21融资融券信息显示，中公教育融资余额\n95,821,528元，融券余额8,179,797元，融资买入额6,608,259元，融资偿还额\n6,481,082元，融资净买额127,177元，融券余量256,441股，融券卖出量50,200\n股，融券…'],
 ['中公教育：融资净买入12.72万元，融\n资余额9582.15万元（04-21）\n' + S + '21462916565.html', '中公教育融资融券信息显示，2020年4月21日融资净买入12.72万元；融资余额\n9582.15万元，较前一日增加0.13%。融资方面，当日融资买入660.83万元，融\n资偿还648.11万元，融资净买入12.72万元。融券方面，融券卖出5.02万股，融\n券偿还2.57万股，融券余量25…']]],
16: ['华北制药', 7, [
 ['重大重组停牌14天 华北制药复牌迎连\n续4日涨停\n' + F + '4221463947214.html', '因筹划重大重组事项，华北制药4月3日停牌，并于4月17日复牌迎连续收获四\n个涨停。4月22日收盘时，华北制药股价为11.56元/股，四日涨幅累计超46.51%\n，当天，华北制药发布股价异常波动公告提示风险。4月2日晚间，华北制药发\n布筹划发行股份购买资产的停牌公告，称公…'],
 ['华北制药4月22日打开涨停\n' + S + '21463335043.html', '以下是华北制药在北京时间4月22日10:13分盘口异动快报：4月22日10点13分\n，华北制药盘中打开涨停，现报11.54元，成交16.98亿元，换手率9.29%，该股\n之前于9点40分涨停。分笔10:13:3211.54388↓10:13:2911.55128↑10:13:2611…'],
 ['华北制药(600812)融资融券信息(04-\n' + L + '04221463069168.html', '华北制药(600812)2020-04-21融资融券信息显示，华北制药融资余额\n223,907,215元，融券余额2,870,581元，融资买入额2,100,000元，融资偿还额\n19,921,404元，融资净买额-17,821,404元，融券余量254,100股，融券卖出量0\n股，融…'],
 ['华北制药4月22日盘中涨停\n' + S + '21462941393.html', '以下是华北制药在北京时间4月22日09:40分盘口异动快报：4月22日9点40分，\n华北制药盘中涨停，报11.56元，目前封单11.9489手，折合1.38亿元，截至目前\n，成交12.97亿元，换手率7.11%。分笔\n09:40:1111.5661537↑09:40:0911.56561…'],
 ['华北制药：连续12日融资净偿还累计\n3848.15万元（04-21）', '华北制药融资融券信息显示，2020年4月21日融资净偿还1782.6万元；融资余\n额2.24亿元，较前一日下降7.37%。融资方面，当日融资买入210.2万元，融资']]],
17: ['亿帆医药', 2, [
 ['亿帆医药(002019)融资融券信息(04-\n' + L + '04221463322153.html', '亿帆医药(002019)2020-04-21融资融券信息显示，亿帆医药融资余额\n1,067,097,093元，融券余额8,051,737元，融资买入额34,352,476元，融资偿还\n额54,742,144元，融资净买额-20,389,668元，融券余量440,467股，融券卖出量\n1…'],
 ['亿帆医药：融资净偿还2038.97万元，\n融资余额10.67亿元（04-21）\n' + S + '21462888550.html', '亿帆医药融资融券信息显示，2020年4月21日融资净偿还2038.97万元；融资余\n额10.67亿元，较前一日下降1.84%。融资方面，当日融资买入3435.25万元，融\n资偿还5474.21万元，融资净偿还2038.97万元。融券方面，融券卖出1.75万股\n，融券偿还1.67万股，融…']]],
18: ['圣达生物', 1, [
 ['圣达生物4月22日盘中涨幅达\n5%http://stock.eastmoney.com/a/20200\n4221463497917.html', '以下是圣达生物在北京时间4月22日14:11分盘口异动快报：4月22日，圣达生\n物盘中涨幅达5%，截至14点11分，报48.3元，成交1.20亿元，换手率5.77%，分\n笔14:11:3948.3049↑14:11:3648.245↓14:11:3348.2919↓14:11:304…']]],
19: ['振华股份', 0],
20: ['三一重工', 4, [
 ['灯罩设计被仿冒！三一重工索赔307万\n元\n' + F + '4221463734021.html', '仅仅是泵车上的一个小小零部件，价格就将近400万元？在案讨国间九合重工\n新推出的一泵车灯罩后，湖南三一重工决定起诉，“他们产品的设计全面抄袭了\n我们的专利产品，特别是‘L’形双‘蹲僵形匹配’等过几个设计要点。”4月21\n日，长沙市中级人民法院、长沙市知识产权法庭…'],
 ['三一重工(600031)融资融券信息(04-\n' + L + '04221463007168.html', '三一重工(600031)2020-04-21融资融券信息显示，三一重工融资余额\n1,196,190,840元，融券余额48,230,910元，融资买入额45,375,581元，融资偿还\n额55,325,379元，融资净买额-9,949,818元，融券余量2,473,380股，融券卖出…'],
 ['长沙工程机械企业一季度产销两旺 本\n地配套率有望进一步提高\n' + F + '4221462988292.html', '今年一季度，最火的产业是哪个？工程机械应该是其中之一。一直以来，挖掘\n机被视作工程机械行业的风向标，也被视作经济晴雨表之一。来自中国工程机\n械工业协会统计数据显示，今年1至3月共销售挖掘机68630台，其中3月共销售\n挖掘机49408台，同比增长11.2%，国内和出口销量…'],
 ['三一重工：连续3日融资净偿还累计\n6947.2万元（04-21）\n' + S + '21462956469.html', '三一重工融资融券信息显示，2020年4月21日融资净偿还907.94万元；融资余\n额11.36亿元，较前一日下降0.87%。融资方面，当日融资买入4537.56万元，融\n资偿还5445.5万元，融资净偿还907.94万元，连续3日净偿还累计6947.2万元。\n融券方面，融券卖出13.1…']]],
21: ['海天味业', 2, [
 ['海天味业(603288)融资融券信息(04-\n' + L + '04221463068098.html', '海天味业(603288)2020-04-21融资融券信息显示，海天味业融资余额\n119,875,344元，融券余额78,734,325.75元，融资买入额20,713,532元，融资偿\n还额16,511,766元，融资净买额4,201,766元，融券余量628,620股，融券卖出量\n6…'],
 ['海天味业：融资净买入392.74万元，融\n资余额1.25亿元（04-21）\n' + S + '21462990121.html', '海天味业融资融券信息显示，2020年4月21日融资净买入392.74万元；融资余\n额1.25亿元，较前一日增加3.64%。融资方面，当日融资买入2071.35万元，融资\n偿还1678.61万元，融资净买入392.74万元。融券方面，融券卖出6.21万股，融\n券偿还1.16万股，融券余量6…']]],
22: ['贵州茅台', 22, [
 ['贵州茅台股价创新高 多只消费股概念\n新里当值为王逻辑\n' + F + '4221463930157.html', '本周两家上市公司发布年报、一季报。今天市场重磅最热的生肖当属“大A一哥”贵\n州茅台。昨天晚间公布2019年业绩后，贵州茅台今天涨超1244.5元。突破5个\n月前的历史高点，而受2020年一季报业绩的推动，总算得将今日大涨近7%。股\n价同样创出历史新高。业内表示，尽管一季度全球金融市…'],
 ['第一大重仓股 茅台！一季报透露公募\n基金有两刘 对于后市 会十基金经理这样\n看\n' + F + '4221463923873.html', '2020年一季度，全球市场起伏震荡，公募基金也因被疫股调仓，医药和科技主\n头被大举增持，部分消费个股被减持。市场波动较大，多位金牛基金经理建议\n积极把握市场理性情绪带来的错误机会，买入优质股仓。摘星后市，基金经理\n认为，在充裕流动性和优质基本面下，A股二季度走势将更落跌。'],
 ['茅台股价“又双叒叕”创历史新高！贴念\n套还有机会“上车”吗？\n' + F + '4221463909713.html', '1340元！1497元！1502元！1518元！在短期贵州茅台股价一路上涨的过程中\n，券商也不断捕高目标价。4月22日，贵州茅台股价高创历史新高，盘中一度\n触及至1249.50元。截至收盘，该股大涨3.71%，报1244.50元。要破总市值达到\n15633.36亿元，…'],
 ['茅台股价创历史 疫情之下如面成习惯\n善共身？\n' + F + '4221463902278.html', '4月22日，贵州茅台股价在盘中再创历史新高。截至当日收盘，贵州茅台股价\n达收于1244元，涨幅3.71%，当日最高价达1249.5元，总市值达1.56万亿。事实\n上，无论是在零售终端的产品价格还是在资本市场，贵州茅台都有着极为表现\n，而且，记者走访了部分线下终端市场发现，北京市场飞…'],
 ['', '']]],
23: ['美的集团', 2, [
 ['美的集团(000333)融资融券信息(04-\n' + L + '04221463156782.html', '美的集团(000333)2020-04-21融资融券信息显示，美的集团融资余额\n2,122,829,624元，融券余额42,231,869元，融资买入额37,292,193元，融资偿还\n额45,998,521元，融资净买额-8,706,328元，融券余量849,476股，融券卖出量\n8…'],
 ['美的集团：连续3日融资净偿还累计\n4485.56万元（04-21）\n' + S + '21462845488.html', '美的集团融资融券信息显示，2020年4月21日融资净偿还870.61万元；融资余\n额21.23亿元，较前一日下降0.41%。融资方面，当日融资买入3729.02万元，融\n资偿还4599.85万元，融资净偿还870.61万元，连续3日净偿还累计4485.56万元\n，融券方面，融券卖出8…']]],
24: ['中国平安', 6, [
 ['沪股通连续1日净卖出 中国平安 累计净\n卖出11.73亿元\n' + F + '4221463906442.html', '4月22日中国平安遭沪股通净卖出3.29亿元，为连续1日净卖出。合计净卖出\n11.73亿元，期间股价下跌0.46%。证券时报数据宝统计显示，4月22日北向资\n金成交净买入11.78亿元，其沪深股通成交活跃榜中，中国平安全天成交9.52亿元\n，成交净卖出3.29亿元，为连续第3…'],
 ['中国平安04月22日发生1笔大宗交易 价\n格65.16元 折价\n6.09%http://stock.eastmoney.com/a/202\n004221463925454.html', '2020年04月22日，中国平安发生了1笔大宗交易，总成交数量为15.36万股，总\n成交金额为1000.86万元，成交价格为65.16元。当日收盘报价72.87元，涨幅-\n0.41%，成交金额27.06亿元；大宗交易成交金额占当日成交金额0.37%，折价\n9.59%。大宗交易报情加。'],
 ['金融壹账通易福加坡金融科技协会共同\n成立区块链协会福加坡分会\n' + S + '21463560960.html', '金融壹账通(NYSE:OCFT)21日宣布，已经与福加坡金融科技协会“SFA”)共同成\n立区块链协会福加坡分会“BASF”)，该协会将成为通过使用区块链和可扩展技术\n推动业务互动和合作的中心，以推动业务模式和转型，并为数字经济增能可持\n续的区块链人才云水准。据介绍，…'],
 ['中国平安(601318)融资融券信息(04-\n' + L + '04221462999691.html', '中国平安(601318)2020-04-21融资融券信息显示，中国平安融资余额\n22,476,942,311元，融券余额141,389,705.22元，融资买入额423,964,981元，融\n资偿还额499,494,800元，融资净买额-75,630,407元，融券余量1,953,7…'],
 ['中国平安：融资净偿还7170.31万元，\n两市净偿第七（04-21）', '中国平安融资融券信息显示，2020年4月21日融资净偿还7170.31万元；融资余\n额224.8亿元，较前一日下降0.34%。融资方面，当日融资买入4.23亿元，融资']]]
};

const COURT = `<svg class="court" viewBox="90 68 648 449" preserveAspectRatio="none">
<path d="M102 214L728 217M102 229H170L415 217L670 230H728M102 260L415 217L728 260M102 308L415 217L728 307M415 217L195 510M415 217L636 510"/>
<path d="M108 217C112 260 200 303 415 303S720 260 722 217M288 217C292 232 340 244 415 244S540 232 544 217"/></svg>`;
const BRAND = `<div class="brand"><svg width="16" height="16" viewBox="0 0 16 16"><path fill="none" stroke="#ddd" stroke-width="1.300" d="M6.500 12V7.500H4.500Q5 4.500 8 4.500Q11 4.500 11.500 8H9.500V11.500H11"/></svg>Four Jarvis</div>`;
const lines = t => t.split('\n').map(l => `<span class="line">${l}</span>`).join('');

function report([name, count, rows]) {
  const sub = count
    ? `本次舆情监控目标:${name}，当天共爬取东方财富网内相关新闻${count}篇，具体新闻如下：`
    : `本次舆情监控目标:${name}，当天东方财富网内无该公司相关新闻!`;
  const table = rows ? `<div class="table"><div class="th">新闻标题</div><div class="th">新闻摘要</div>${
    rows.map((r, i) => r.map(c => `<div class="${i % 2 ? 'even' : 'odd'}">${lines(c)}</div>`).join('')).join('')}</div>` : '';
  return `${COURT}<div class="head">${BRAND}<div class="name">${name}舆情报告</div></div><div class="sub">${sub}</div>${table}`;
}

function chart() {
  const names = '阿里巴巴 贵州茅台 瑞幸咖啡 腾讯控股 中国联通 华北制药 TCL科技 格力电器 中国平安 海康威视 三一重工 永太科技 朗科科技 智飞股 飞天诚信 海天味业 海螺水泥 华润三九 分众传媒 美的集团 乐普医疗 亿帆医药 中公教育 圣达生物'.split(' ');
  const vals = [23, 22, 21, 14, 9, 7, 6, 6, 6, 4, 4, 4, 4, 3, 3, 2, 2, 2, 2, 2, 2, 2, 2, 1];
  let s = '<text x="136" y="18" text-anchor="middle" font-size="5.300" fill="#333">今日新闻概览图</text><path fill="none" stroke="#e2e2e2" stroke-width=".8" d="M32.500 19.500H239V138.500H32.500Z"/>';
  vals.forEach((v, i) => {
    const x = 41.5 + 8.59 * (v - 1), y = 24.6 + 4.73 * i;
    s += `<path stroke="#f0f0f0" stroke-width=".6" d="M41 ${y}H230"/><text x="32" y="${y + 1.2}" text-anchor="end">${names[i]}</text><circle cx="${x}" cy="${y}" r=".6" fill="#e58a8a"/><text x="${x + 3}" y="${y + 1.2}">${v}</text>`;
  });
  for (let x = 33; x < 220; x += 43) s += `<path stroke="#ccc" stroke-width=".6" d="M${x} 138.500V140.500"/>`;
  return `<svg class="chart" width="264" height="149" viewBox="0 0 264 149">${s}<text x="135" y="143" text-anchor="middle">新闻数量</text></svg>`;
}

const deck = document.getElementById('deck');
for (let n = 1; n <= 24; n++) {
  const inner = n === 1
    ? `${COURT}<div class="head">${BRAND}</div><div class="cover">Four Jarvis 数据分析报告<small>2020-04-22</small></div>`
    : n === 2 ? chart() : report(decks[n]);
  deck.insertAdjacentHTML('beforeend', `<div><div class="slide">${inner}</div><div class="num">${n}</div></div>`);
}
// Tighten any line that is wider than its cell.
document.querySelectorAll('.line').forEach(l => {
  const room = l.parentNode.clientWidth - 4, w = l.getBoundingClientRect().width;
  if (w > room) l.style.letterSpacing = (room - w) / l.textContent.length + 'px';
});
```
